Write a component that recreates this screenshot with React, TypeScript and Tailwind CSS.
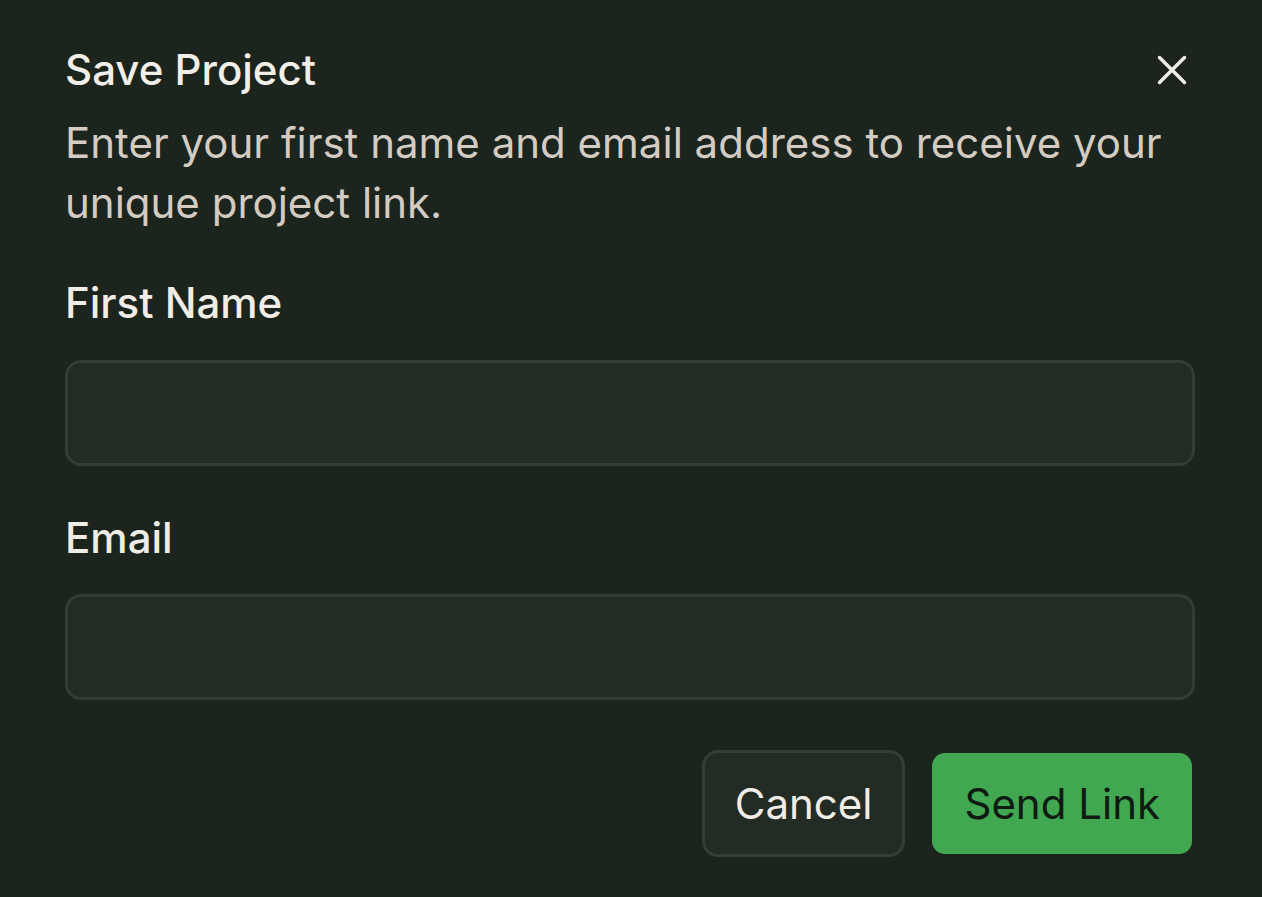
import React from "react"

const CloseIcon = () => (
    <svg width="30" height="30" viewBox="0 0 30 30" fill="none">
        <path
            d="M2.5 2.5L27.5 27.5M27.5 2.5L2.5 27.5"
            stroke="#f0ece6"
            strokeWidth="3.5"
            strokeLinecap="round"
        />
    </svg>
)

const Field = ({
    label,
    id,
    type,
    className,
    inputGap,
}: {
    label: string
    id: string
    type: string
    className?: string
    inputGap: string
}) => {
    return (
        <div className={className}>
            <label htmlFor={id} className="block text-[42px] leading-[60px] font-medium text-[#f0ece6]">
                {label}
            </label>
            <input
                id={id}
                type={type}
                className={`${inputGap} block h-[106px] w-full rounded-[16px] border-[3px] border-[#343c36] bg-[#232b25] px-[30px] text-[40px] text-[#f0ece6] outline-none`}
            />
        </div>
    )
}

const App = () => {
    return (
        <div className="min-h-screen bg-[#1c241e] pl-[65px] pr-[67px] pt-[40px] font-['Inter','Noto_Sans',sans-serif]">
            <div className="flex items-center justify-between">
                <h2 className="text-[42px] leading-[60px] font-medium text-[#f2eee8]">Save Project</h2>
                <button className="mr-[8px] flex items-center justify-center">
                    <CloseIcon />
                </button>
            </div>
            <p className="mt-[13px] text-[42px] leading-[60px] text-[#d4ccc2]">
                Enter your first name and email address to receive your unique project link.
            </p>

            <Field label="First Name" id="first-name" type="text" className="mt-[40px]" inputGap="mt-[27px]" />
            <Field label="Email" id="email" type="email" className="mt-[42px]" inputGap="mt-[26px]" />

            <div className="mt-[50px] flex justify-end gap-[24px]">
                <button className="h-[107px] rounded-[16px] border-[3px] border-[#353d37] bg-[#232b25] px-[30px] text-[42px] text-[#f0ece6]">
                    Cancel
                </button>
                <button className="h-[107px] rounded-[16px] border-[3px] border-transparent bg-[#41a751] bg-clip-padding px-[32px] text-[42px] text-[#0f1a12]">
                    Send Link
                </button>
            </div>
        </div>
    )
}

export default App
